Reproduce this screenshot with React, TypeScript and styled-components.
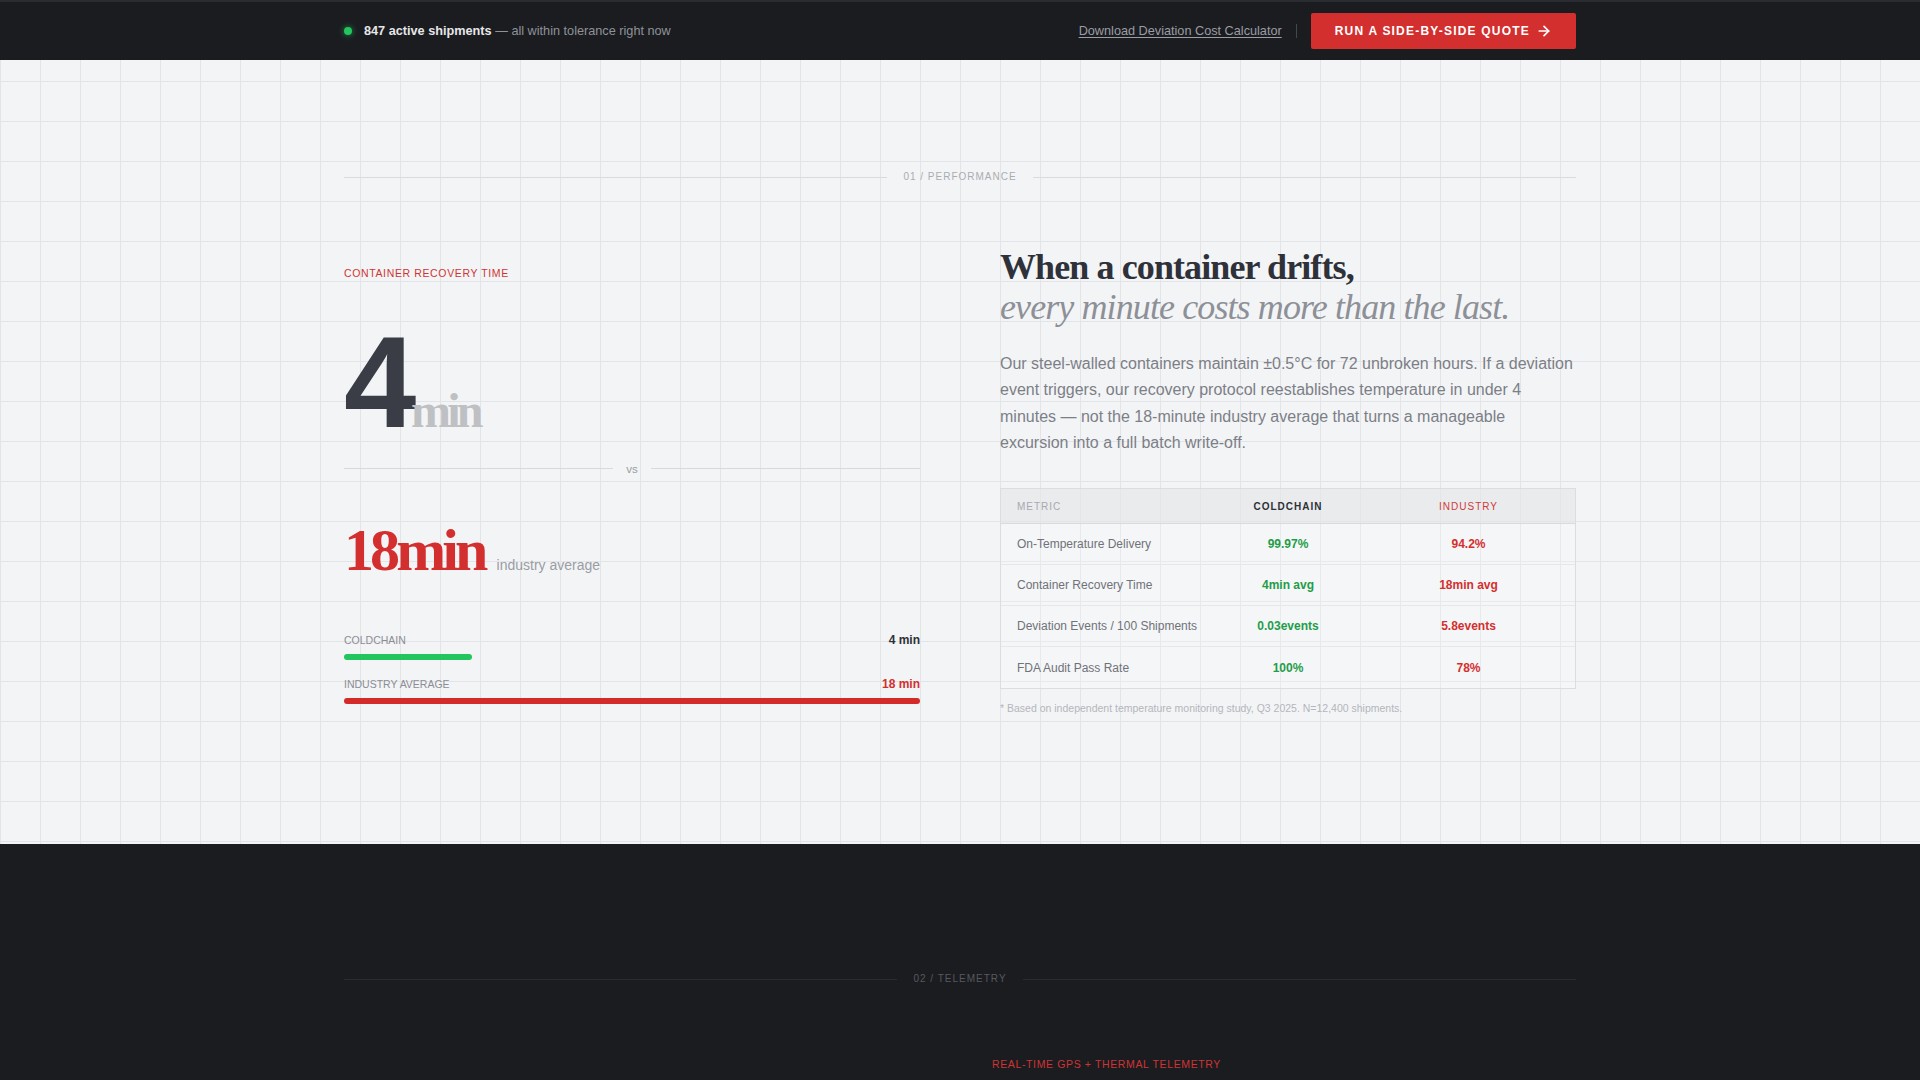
import React from 'react';
import styled, { createGlobalStyle } from 'styled-components';
import { ArrowRight } from 'lucide-react';

const SANS = "'Liberation Sans', Arial, Helvetica, sans-serif";
const SERIF = "'Liberation Serif', 'Times New Roman', serif";

const RED = '#d32f2f';
const GREEN = '#1f9d49';

type MetricRow = {
	metric: string;
	ours: string;
	theirs: string;
};

const metrics: MetricRow[] = [
	{ metric: 'On-Temperature Delivery', ours: '99.97%', theirs: '94.2%' },
	{ metric: 'Container Recovery Time', ours: '4min avg', theirs: '18min avg' },
	{ metric: 'Deviation Events / 100 Shipments', ours: '0.03events', theirs: '5.8events' },
	{ metric: 'FDA Audit Pass Rate', ours: '100%', theirs: '78%' },
];

const bars = [
	{ label: 'Coldchain', value: 4, tone: 'ours' as const },
	{ label: 'Industry Average', value: 18, tone: 'theirs' as const },
];
const maxMinutes = 18;

function SectionDivider({ label, dark }: { label: string; dark?: boolean }) {
	return <Rule $dark={dark}>{label}</Rule>;
}

function App() {
	return (
		<>
			<GlobalStyle />
			<TopBar>
				<Inner>
					<Status>
						<Dot />
						<span>
							<Strong>847 active shipments</Strong> — all within tolerance right now
						</span>
					</Status>
					<Actions>
						<TextLink href="#">Download Deviation Cost Calculator</TextLink>
						<Pipe />
						<CtaButton>
							RUN A SIDE-BY-SIDE QUOTE
							<ArrowRight size={16} strokeWidth={2.6} />
						</CtaButton>
					</Actions>
				</Inner>
			</TopBar>

			<Performance>
				<Inner $column>
					<SectionDivider label="01 / PERFORMANCE" />
					<Split>
						<Stats>
							<Eyebrow>CONTAINER RECOVERY TIME</Eyebrow>
							<Figure>
								<FigureNum>4</FigureNum>
								<FigureUnit>min</FigureUnit>
							</Figure>
							<Versus>vs</Versus>
							<Compare>
								<CompareNum>18min</CompareNum>
								<CompareNote>industry average</CompareNote>
							</Compare>
							<Bars>
								{bars.map((b, i) => (
									<BarItem key={b.label} $first={i === 0}>
										<BarHead>
											<BarLabel>{b.label}</BarLabel>
											<BarValue $tone={b.tone}>{b.value} min</BarValue>
										</BarHead>
										<Bar
											$tone={b.tone}
											style={{ width: `${(b.value / maxMinutes) * 100}%` }}
										/>
									</BarItem>
								))}
							</Bars>
						</Stats>

						<Story>
							<Headline>
								When a container drifts,
								<HeadlineSoft>every minute costs more than the last.</HeadlineSoft>
							</Headline>
							<Lead>
								Our steel-walled containers maintain ±0.5°C for 72 unbroken hours. If a
								deviation event triggers, our recovery protocol reestablishes temperature in
								under 4 minutes — not the 18-minute industry average that turns a manageable
								excursion into a full batch write-off.
							</Lead>
							<Table>
								<Row $head>
									<HeadCell>METRIC</HeadCell>
									<HeadCell $tone="ours">COLDCHAIN</HeadCell>
									<HeadCell $tone="theirs">INDUSTRY</HeadCell>
								</Row>
								{metrics.map((m) => (
									<Row key={m.metric}>
										<MetricCell>{m.metric}</MetricCell>
										<ValueCell $tone="ours">{m.ours}</ValueCell>
										<ValueCell $tone="theirs">{m.theirs}</ValueCell>
									</Row>
								))}
							</Table>
							<Footnote>
								* Based on independent temperature monitoring study, Q3 2025. N=12,400 shipments.
							</Footnote>
						</Story>
					</Split>
				</Inner>
			</Performance>

			<Telemetry>
				<Inner $column>
					<SectionDivider label="02 / TELEMETRY" dark />
					<DarkSplit>
						<div />
						<Eyebrow>REAL-TIME GPS + THERMAL TELEMETRY</Eyebrow>
					</DarkSplit>
				</Inner>
			</Telemetry>
		</>
	);
}

export default App;

const GlobalStyle = createGlobalStyle`
	* { box-sizing: border-box; }
	html, body { margin: 0; padding: 0; }
	body {
		background: #1b1c1f;
		font-family: ${SANS};
		-webkit-font-smoothing: antialiased;
	}
`;

const Inner = styled.div<{ $column?: boolean }>`
	width: 1232px;
	margin: 0 auto;
	display: flex;
	flex-direction: ${(p) => (p.$column ? 'column' : 'row')};
	align-items: ${(p) => (p.$column ? 'stretch' : 'center')};
	justify-content: space-between;
`;

/* ---------- top bar ---------- */

const TopBar = styled.header`
	height: 60px;
	background: #1b1c20;
	border-top: 2px solid #2a2c31;
	display: flex;
	align-items: center;
`;

const Status = styled.div`
	display: flex;
	align-items: center;
	gap: 12px;
	font-size: 12.7px;
	color: #8f9298;
`;

const Dot = styled.span`
	width: 8px;
	height: 8px;
	border-radius: 50%;
	background: #22c55e;
	box-shadow: 0 0 6px rgba(34, 197, 94, 0.7);
`;

const Strong = styled.strong`
	color: #e6e7e9;
	font-weight: 700;
`;

const Actions = styled.div`
	display: flex;
	align-items: center;
	gap: 14px;
`;

const TextLink = styled.a`
	font-size: 12.7px;
	color: #9a9da3;
	text-decoration: underline;
	text-underline-offset: 2px;
`;

const Pipe = styled.span`
	width: 1px;
	height: 14px;
	background: #44474c;
`;

const CtaButton = styled.button`
	height: 36px;
	padding: 0 24px;
	display: flex;
	align-items: center;
	gap: 6px;
	border: none;
	border-radius: 2px;
	background: ${RED};
	color: #fff;
	font-family: ${SANS};
	font-size: 12px;
	font-weight: 700;
	letter-spacing: 0.1em;
	cursor: pointer;
`;

/* ---------- section shells ---------- */

const Performance = styled.section`
	background-color: #f3f4f6;
	background-image: linear-gradient(to right, #e3e4e7 1px, transparent 1px),
		linear-gradient(to bottom, #e3e4e7 1px, transparent 1px);
	background-size: 40px 40px;
	background-position: 0 21px;
	padding: 111px 0 128px;
`;

const Telemetry = styled.section`
	background: #1b1c1f;
	padding: 129px 0 160px;
`;

const Rule = styled.div<{ $dark?: boolean }>`
	display: flex;
	align-items: center;
	gap: 16px;
	font-size: 10px;
	line-height: 12px;
	letter-spacing: 0.1em;
	color: ${(p) => (p.$dark ? '#56595f' : '#a9acb1')};

	&::before,
	&::after {
		content: '';
		flex: 1;
		height: 1px;
		background: ${(p) => (p.$dark ? '#2a2c30' : '#dadbde')};
	}
`;

const Split = styled.div`
	display: grid;
	grid-template-columns: 1fr 1fr;
	gap: 80px;
	align-items: center;
	margin-top: 65px;
`;

const DarkSplit = styled.div`
	display: grid;
	grid-template-columns: 1fr 1fr;
	gap: 64px;
	margin-top: 72px;
`;

const Eyebrow = styled.div`
	font-size: 10.5px;
	line-height: 15px;
	letter-spacing: 0.06em;
	color: #cf3434;
`;

/* ---------- left column ---------- */

const Stats = styled.div`
	display: flex;
	flex-direction: column;
	margin-top: 5px;
`;

const Figure = styled.div`
	display: flex;
	align-items: baseline;
	margin-top: 36px;
	line-height: 1;
	height: 130px;
`;

const FigureNum = styled.span`
	font-family: ${SANS};
	font-weight: 700;
	font-size: 130px;
	letter-spacing: -0.04em;
	color: #3a3d45;
`;

const FigureUnit = styled.span`
	font-family: ${SERIF};
	font-weight: 700;
	font-size: 48px;
	letter-spacing: -0.08em;
	color: #bfc0c3;
`;

const Versus = styled.div`
	display: flex;
	align-items: center;
	gap: 13px;
	margin-top: 16px;
	font-size: 11.5px;
	line-height: 12px;
	color: #9a9da3;

	&::before,
	&::after {
		content: '';
		flex: 1;
		height: 1px;
		background: #d8d9dc;
	}
`;

const Compare = styled.div`
	display: flex;
	align-items: baseline;
	gap: 12px;
	margin-top: 45px;
	line-height: 1;
	height: 60px;
`;

const CompareNum = styled.span`
	font-family: ${SERIF};
	font-weight: 700;
	font-size: 60px;
	letter-spacing: -0.065em;
	color: ${RED};
`;

const CompareNote = styled.span`
	font-size: 14px;
	color: #9a9da3;
`;

const Bars = styled.div`
	margin-top: 52px;
	display: flex;
	flex-direction: column;
`;

const BarItem = styled.div<{ $first?: boolean }>`
	margin-top: ${(p) => (p.$first ? 0 : 16)}px;
`;

const BarHead = styled.div`
	display: flex;
	justify-content: space-between;
	align-items: center;
	height: 16px;
`;

const BarLabel = styled.span`
	font-size: 10.5px;
	text-transform: uppercase;
	color: #8a8d93;
`;

const BarValue = styled.span<{ $tone: 'ours' | 'theirs' }>`
	font-size: 12px;
	font-weight: 700;
	color: ${(p) => (p.$tone === 'ours' ? '#2e3138' : RED)};
`;

const Bar = styled.div<{ $tone: 'ours' | 'theirs' }>`
	margin-top: 6px;
	height: 6px;
	border-radius: 3px;
	background: ${(p) => (p.$tone === 'ours' ? '#22c55e' : '#d42a2a')};
`;

/* ---------- right column ---------- */

const Story = styled.div`
	display: flex;
	flex-direction: column;
`;

const Headline = styled.h2`
	margin: 0;
	font-family: ${SERIF};
	font-weight: 700;
	font-size: 36px;
	line-height: 1.1;
	letter-spacing: -0.025em;
	color: #2e3139;
`;

const HeadlineSoft = styled.em`
	display: block;
	font-weight: 400;
	font-style: italic;
	color: #8d9096;
`;

const Lead = styled.p`
	margin: 24px 0 0;
	font-size: 16px;
	line-height: 1.64;
	color: #7c7f86;
`;

const Table = styled.div`
	margin-top: 32px;
	border: 1px solid #dcdde0;
	background: rgba(255, 255, 255, 0.2);
`;

const Row = styled.div<{ $head?: boolean }>`
	display: grid;
	grid-template-columns: 213px 148px 1fr;
	align-items: center;
	height: ${(p) => (p.$head ? 35 : 41)}px;
	background: ${(p) => (p.$head ? 'rgba(224, 226, 229, 0.55)' : 'transparent')};
	border-bottom: 1px solid ${(p) => (p.$head ? '#d9dadd' : '#e6e7e9')};

	&:last-child {
		border-bottom: none;
	}
`;

const HeadCell = styled.div<{ $tone?: 'ours' | 'theirs' }>`
	font-size: 10px;
	letter-spacing: 0.1em;
	text-align: ${(p) => (p.$tone ? 'center' : 'left')};
	padding-left: ${(p) => (p.$tone ? 0 : 16)}px;
	font-weight: ${(p) => (p.$tone === 'ours' ? 700 : 400)};
	color: ${(p) => (p.$tone === 'ours' ? '#2e3138' : p.$tone === 'theirs' ? '#d03a3a' : '#a6a9ae')};
`;

const MetricCell = styled.div`
	padding-left: 16px;
	font-size: 12px;
	color: #6f7279;
`;

const ValueCell = styled.div<{ $tone: 'ours' | 'theirs' }>`
	text-align: center;
	font-size: 12px;
	font-weight: 700;
	color: ${(p) => (p.$tone === 'ours' ? GREEN : RED)};
`;

const Footnote = styled.div`
	margin-top: 12px;
	font-size: 10.5px;
	line-height: 15px;
	color: #b3b6bb;
`;
